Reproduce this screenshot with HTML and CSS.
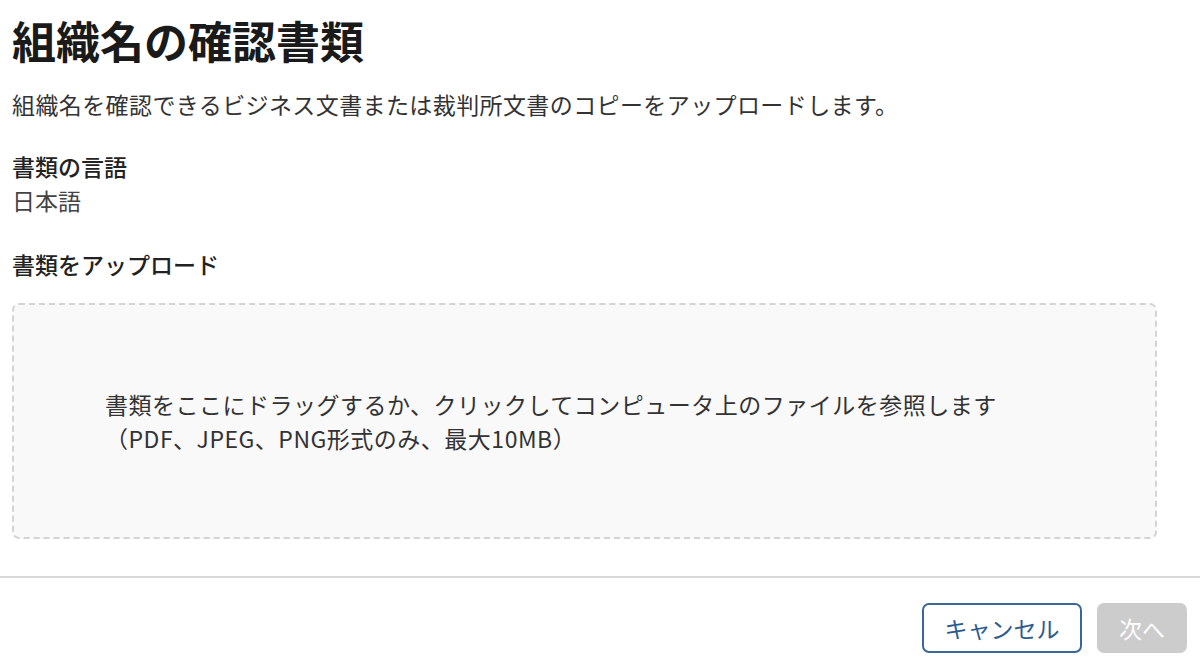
FILE: index.html
```html
<!DOCTYPE html>
<html lang="ja">
<head>
  <meta charset="UTF-8">
  <meta name="viewport" content="width=device-width, initial-scale=1.0">
  <title>組織名の確認書類</title>
  <link rel="stylesheet" href="styles.css">
</head>
<body>
  <div class="page">
    <div class="content">
      <h1 class="title">組織名の確認書類</h1>
      <p class="lead">組織名を確認できるビジネス文書または裁判所文書のコピーをアップロードします。</p>

      <div class="field">
        <div class="label">書類の言語</div>
        <div class="value">日本語</div>
      </div>

      <div class="label upload-label">書類をアップロード</div>

      <div class="dropzone">
        <div class="drop-text">
          <div>書類をここにドラッグするか、クリックしてコンピュータ上のファイルを参照します</div>
          <div>（PDF、JPEG、PNG形式のみ、最大10MB）</div>
        </div>
      </div>
    </div>

    <div class="footer">
      <button class="btn btn-outline" type="button">キャンセル</button>
      <button class="btn btn-disabled" type="button" disabled>次へ</button>
    </div>
  </div>
</body>
</html>
```

FILE: styles.css
```css
* {
  box-sizing: border-box;
}

body {
  margin: 0;
  font-family: "Noto Sans CJK JP", "Noto Sans", sans-serif;
  color: #333;
  background: #fff;
}

.content {
  padding: 8px 43px 0 12px;
}

.title {
  margin: 0;
  font-size: 44px;
  line-height: 64px;
  font-weight: 700;
  color: #1a1a1a;
}

.lead {
  margin: 15px 0 0;
  font-size: 23px;
  line-height: 34px;
  letter-spacing: 0.4px;
}

.field {
  margin-top: 28px;
}

.label {
  font-size: 23px;
  line-height: 34px;
  font-weight: 500;
  color: #222;
}

.value {
  font-size: 23px;
  line-height: 34px;
  color: #444;
}

.upload-label {
  margin-top: 30px;
}

.dropzone {
  margin-top: 22px;
  height: 236px;
  border: 2px dashed #d4d4d4;
  border-radius: 7px;
  background: #f9f9f9;
  display: flex;
  align-items: center;
  padding-left: 91px;
}

.drop-text {
  font-size: 23px;
  line-height: 34px;
  letter-spacing: 0.5px;
  color: #333;
}

.footer {
  margin-top: 37px;
  border-top: 2px solid #d8d8d8;
  display: flex;
  justify-content: flex-end;
  gap: 15px;
  padding: 25px 13px 0 0;
}

.btn {
  height: 50px;
  font-family: inherit;
  font-size: 23px;
  border-radius: 7px;
  padding: 0 20px;
}

.btn-outline {
  width: 160px;
  background: #fff;
  border: 2px solid #3a6796;
  color: #2d5c8c;
}

.btn-disabled {
  width: 90px;
  background: #cccccc;
  border: none;
  color: #fff;
}
```
